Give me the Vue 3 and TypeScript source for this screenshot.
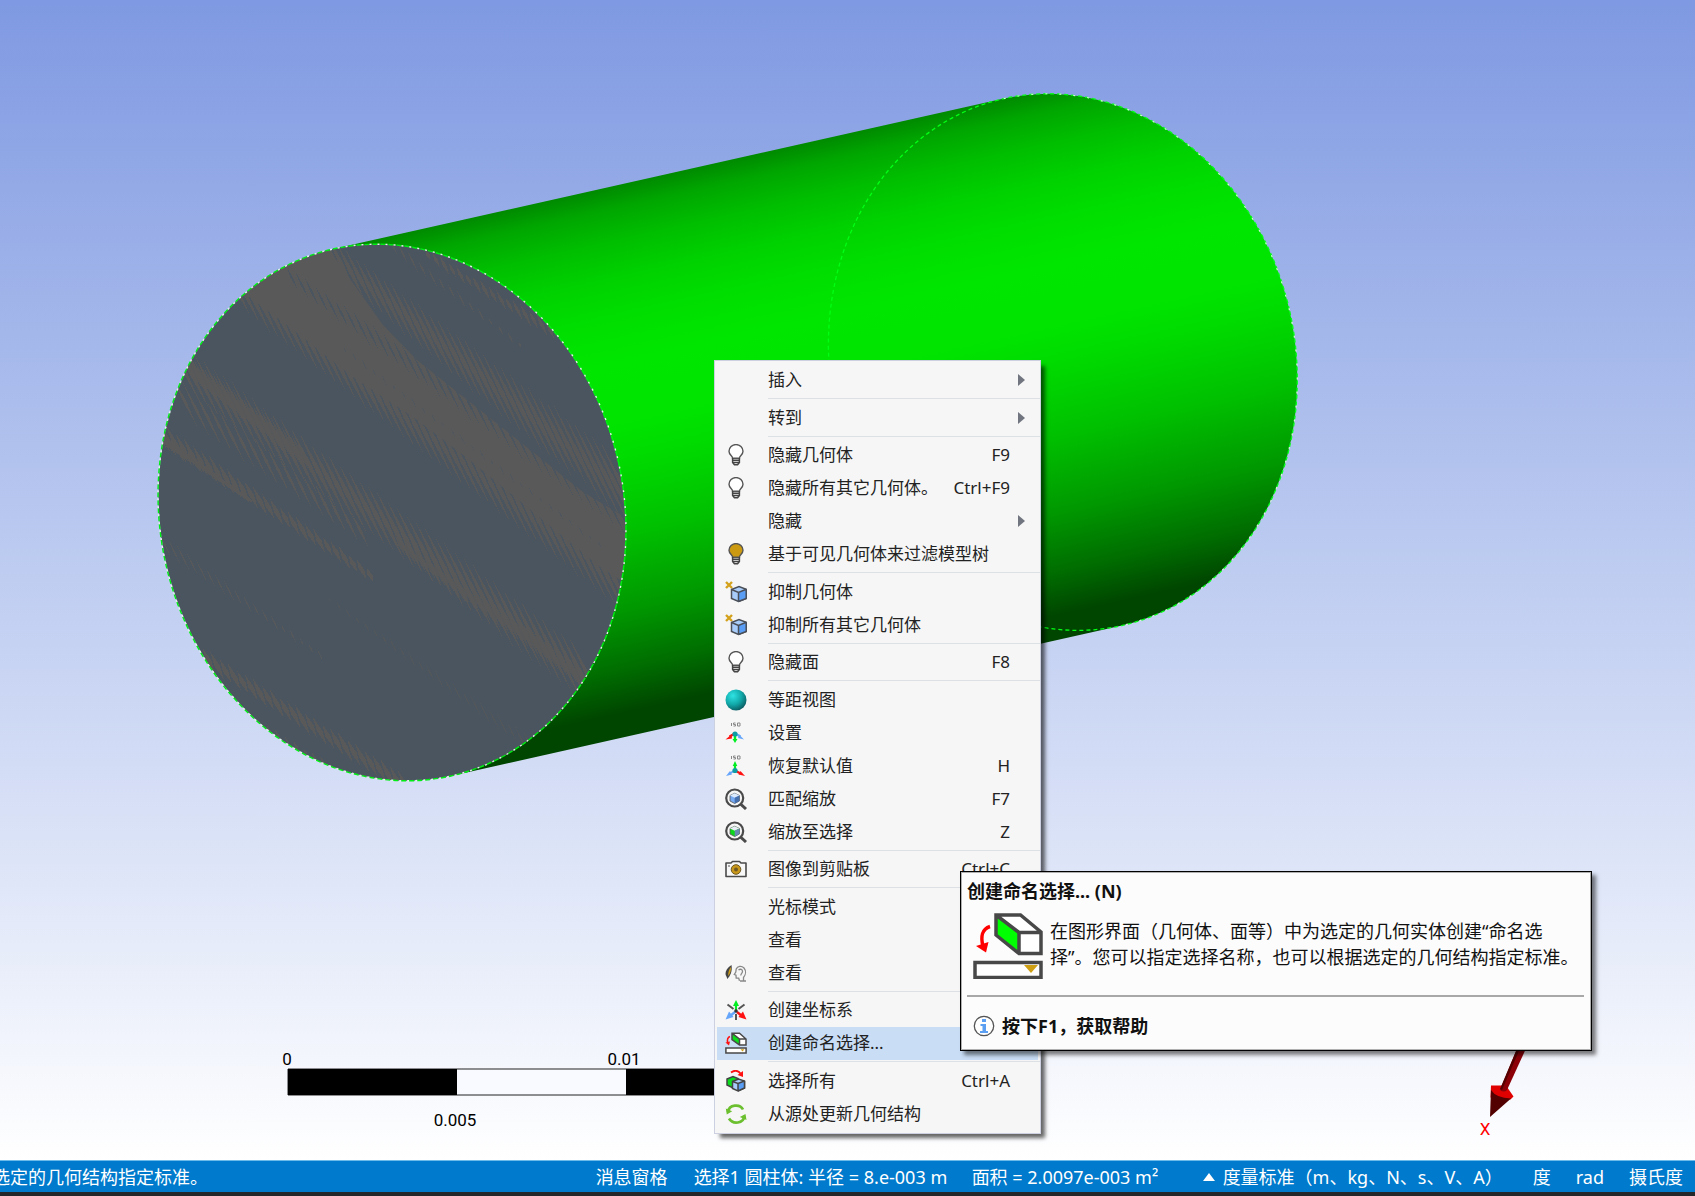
<script setup lang="ts">
interface MenuItem {
  label: string
  icon?: string
  shortcut?: string
  submenu?: boolean
  active?: boolean
}

interface Band {
  from: [number, number]
  to: [number, number]
  half: [number, number]
  pitch: number
  weight: number
  opacity: number
}

const groups: MenuItem[][] = [
  [{ label: '插入', submenu: true }],
  [{ label: '转到', submenu: true }],
  [
    { label: '隐藏几何体', icon: 'bulb', shortcut: 'F9' },
    { label: '隐藏所有其它几何体。', icon: 'bulb', shortcut: 'Ctrl+F9' },
    { label: '隐藏', submenu: true },
    { label: '基于可见几何体来过滤模型树', icon: 'bulb-on' },
  ],
  [
    { label: '抑制几何体', icon: 'suppress' },
    { label: '抑制所有其它几何体', icon: 'suppress' },
  ],
  [{ label: '隐藏面', icon: 'bulb', shortcut: 'F8' }],
  [
    { label: '等距视图', icon: 'sphere' },
    { label: '设置', icon: 'iso-set' },
    { label: '恢复默认值', icon: 'iso-restore', shortcut: 'H' },
    { label: '匹配缩放', icon: 'zoom-fit', shortcut: 'F7' },
    { label: '缩放至选择', icon: 'zoom-selection', shortcut: 'Z' },
  ],
  [{ label: '图像到剪贴板', icon: 'camera', shortcut: 'Ctrl+C' }],
  [
    { label: '光标模式', submenu: true },
    { label: '查看', submenu: true },
    { label: '查看', icon: 'look' },
  ],
  [
    { label: '创建坐标系', icon: 'coordinates' },
    { label: '创建命名选择...', icon: 'named', active: true },
  ],
  [
    { label: '选择所有', icon: 'select-all', shortcut: 'Ctrl+A' },
    { label: '从源处更新几何结构', icon: 'refresh' },
  ],
]

// Interference streaks on the cut face: short steep strokes strung along each band.
const bands: Band[] = [
  { from: [322, 248], to: [625, 492], half: [30, 56], pitch: 12, weight: 2.4, opacity: 1 },
  { from: [235, 285], to: [615, 580], half: [34, 46], pitch: 12, weight: 2.4, opacity: 1 },
  { from: [182, 366], to: [590, 680], half: [38, 46], pitch: 12, weight: 2.5, opacity: 1 },
  { from: [188, 366], to: [300, 452], half: [20, 20], pitch: 6, weight: 2, opacity: 0.8 },
  { from: [400, 545], to: [585, 680], half: [14, 18], pitch: 6, weight: 2, opacity: 0.8 },
  { from: [184, 400], to: [360, 530], half: [32, 20], pitch: 14, weight: 1.6, opacity: 1 },
  { from: [158, 432], to: [370, 575], half: [20, 10], pitch: 10, weight: 2.6, opacity: 1 },
  { from: [158, 436], to: [250, 500], half: [12, 4], pitch: 4, weight: 2, opacity: 1 },
  { from: [165, 545], to: [320, 655], half: [16, 4], pitch: 11, weight: 0.8, opacity: 0.8 },
  { from: [200, 655], to: [405, 785], half: [14, 16], pitch: 10, weight: 2.8, opacity: 1 },
  { from: [260, 725], to: [360, 785], half: [6, 6], pitch: 10, weight: 1.5, opacity: 0.8 },
  { from: [428, 255], to: [550, 330], half: [8, 12], pitch: 9, weight: 2, opacity: 1 },
  { from: [393, 246], to: [520, 345], half: [12, 4], pitch: 12, weight: 1, opacity: 0.8 },
  { from: [330, 600], to: [530, 745], half: [4, 14], pitch: 11, weight: 0.7, opacity: 0.7 },
]

const gaps: Band[] = [
  { from: [292, 278], to: [490, 420], half: [14, 24], pitch: 12, weight: 1.3, opacity: 1 },
  { from: [490, 420], to: [622, 515], half: [24, 28], pitch: 12, weight: 1.3, opacity: 1 },
  { from: [345, 350], to: [600, 545], half: [5, 5], pitch: 12, weight: 0.6, opacity: 0.7 },
]

function streaks(b: Band): string {
  const length = Math.hypot(b.to[0] - b.from[0], b.to[1] - b.from[1])
  const count = Math.floor(length / b.pitch)
  let d = ''
  for (let i = 0; i <= count; i++) {
    const t = i / count
    const x = b.from[0] + (b.to[0] - b.from[0]) * t
    const y = b.from[1] + (b.to[1] - b.from[1]) * t
    const h = b.half[0] + (b.half[1] - b.half[0]) * t + ((i * 7) % 5) - 2
    const dx = h * 0.44
    const dy = h * 0.9
    const w = b.weight
    d += `M${(x - dx).toFixed(1)} ${(y - dy).toFixed(1)}L${(x + w).toFixed(1)} ${y.toFixed(1)}L${(x + dx).toFixed(1)} ${(y + dy).toFixed(1)}L${(x - w).toFixed(1)} ${y.toFixed(1)}Z`
  }
  return d
}
</script>

<template>
  <div class="app">
    <svg class="sprites" aria-hidden="true">
      <defs>
        <radialGradient id="ball" cx="0.35" cy="0.3" r="0.75">
          <stop offset="0" stop-color="#2fe3e3" />
          <stop offset="0.55" stop-color="#12a9aa" />
          <stop offset="1" stop-color="#0b5b60" />
        </radialGradient>
        <symbol id="bulb" viewBox="0 0 22 22">
          <path d="M7.6 14.2C7.6 11.8 4 10.8 4 7.2a7 6.6 0 0 1 14 0c0 3.6-3.6 4.6-3.6 7z" fill="#fff" stroke="#555" stroke-width="1.4" />
          <path d="M7.6 14v4.5l1.8 2.2h3.2l1.8-2.2V14M7.6 16.3h6.8M7.8 18.6h6.4" fill="none" stroke="#444" stroke-width="1.5" />
        </symbol>
        <symbol id="bulb-on" viewBox="0 0 22 22">
          <path d="M7.6 14.2C7.6 11.8 4 10.8 4 7.2a7 6.6 0 0 1 14 0c0 3.6-3.6 4.6-3.6 7z" fill="#cc9a10" stroke="#555" stroke-width="1.4" />
          <path d="M7.6 14v4.5l1.8 2.2h3.2l1.8-2.2V14M7.6 16.3h6.8M7.8 18.6h6.4" fill="none" stroke="#444" stroke-width="1.5" />
        </symbol>
        <symbol id="suppress" viewBox="0 0 22 22">
          <path d="M1 1l6 6M7 1L1 7" stroke="#d3a11c" stroke-width="2.4" />
          <path d="M6.5 8.500L14 5.500l7.200 2.800v9.200L13.500 20.500l-7-3z" fill="#a9cdfa" stroke="#4a4f58" stroke-width="1.500" />
          <path d="M13.500 11.500l7.700-3.200v9.200L13.500 20.500z" fill="#5a9df5" />
          <path d="M6.500 8.500l7 3 7.700-3.200M13.500 11.500v9M21.200 8.300v9.200L13.500 20.500" fill="none" stroke="#4a4f58" stroke-width="1.500" />
        </symbol>
        <symbol id="sphere" viewBox="0 0 22 22"><circle cx="11" cy="11" r="10.500" fill="url(#ball)" /></symbol>
        <symbol id="iso-set" viewBox="0 0 22 22">
          <path d="M6.500 1v3M10.500 1H8.500v1.500h2V4h-2M12.500 1h2.500v3h-2.500z" fill="none" stroke="#888" stroke-width="1" />
          <path d="M10 13v4" stroke="#0e2" stroke-width="2.400" /><path d="M7.500 17h5L10 21z" fill="#0e2" />
          <path d="M9 12L4.500 14.500" stroke="#f11" stroke-width="2.200" /><path d="M6.500 12.500l-6 5 6.500-1z" fill="#f11" />
          <path d="M11 12l4.500 2.500" stroke="#65a5fa" stroke-width="2.200" /><path d="M14 12.500l5 5-6-1.500z" fill="#65a5fa" />
          <circle cx="10" cy="12" r="2.600" fill="#0f9da5" />
        </symbol>
        <symbol id="iso-restore" viewBox="0 0 22 22">
          <path d="M6.500 1v3M10.500 1H8.500v1.500h2V4h-2M12.500 1h2.500v3h-2.500z" fill="none" stroke="#888" stroke-width="1" />
          <path d="M10 15v-5" stroke="#0e2" stroke-width="2.200" /><path d="M7.700 11h4.600L10 6z" fill="#0e2" />
          <path d="M9 16l-4.500 2.500" stroke="#65a5fa" stroke-width="2" /><path d="M5 16l-4 5 6-1.500z" fill="#65a5fa" />
          <path d="M11 16l4.500 2.500" stroke="#f11" stroke-width="2.200" /><path d="M15.500 16l4.500 5-6.500-1.500z" fill="#f11" />
          <circle cx="10" cy="15.500" r="2.600" fill="#0f9da5" />
        </symbol>
        <symbol id="zoom-fit" viewBox="0 0 22 22">
          <path d="M15 15.500l6 5.500" stroke="#4a4a4a" stroke-width="3" />
          <circle cx="9.700" cy="10" r="8.500" fill="#f6f6f6" stroke="#4a4a4a" stroke-width="2.200" />
          <path d="M5 7.500l4.700-2.200 4.700 2.200v5.500l-4.700 2.500L5 13z" fill="#76aaf3" stroke="#555" stroke-width="0.800" />
          <path d="M5 7.500l4.700-2.200 4.700 2.200-4.700 2.200z" fill="#dceafd" />
          <path d="M9.700 9.700l4.700-2.200V13l-4.700 2.500z" fill="#466fae" />
        </symbol>
        <symbol id="zoom-selection" viewBox="0 0 22 22">
          <path d="M15 15.500l6 5.500" stroke="#4a4a4a" stroke-width="3" />
          <circle cx="9.700" cy="10" r="8.500" fill="#f6f6f6" stroke="#4a4a4a" stroke-width="2.200" />
          <path d="M5 7.500l4.700-2.200 4.700 2.200v5.500l-4.700 2.500L5 13z" fill="#0bd81a" stroke="#555" stroke-width="0.800" />
          <path d="M5 7.500l4.700-2.200 4.700 2.200-4.700 2.200z" fill="#e9eef6" />
          <path d="M9.700 9.700l4.700-2.200V13l-4.700 2.500z" fill="#6a86b2" />
        </symbol>
        <symbol id="camera" viewBox="0 0 22 22">
          <path d="M1 5h5l1.500-1.500h7L16 5h5v13.500H1z" fill="#f8f8f8" stroke="#4a4a4a" stroke-width="1.600" stroke-linejoin="round" />
          <circle cx="11" cy="11.500" r="4.800" fill="#c9981b" stroke="#6b5620" stroke-width="1" />
          <circle cx="11" cy="11.500" r="2" fill="#6f5a25" /><path d="M3 8h2" stroke="#555" />
        </symbol>
        <symbol id="look" viewBox="0 0 22 22">
          <path d="M6.500 3C2.500 5.500 .3 9 .5 12c.2 2 1.500 2.500 1.700 5C5.500 14 7.500 9 6.500 3z" fill="#444" />
          <path d="M5.800 5C3.700 8 3 11 3.300 14 5.500 11 6.300 8 5.800 5z" fill="#d0a01b" />
          <path d="M18.500 18.500v-3c2.500-3 2.500-7 .5-9.500-2.500-2.500-6.500-2-7.800 1l-.4 3-1.500 2.500 1.700.7.200 3h2.500l.8 2.500M13.500 8c2-1.500 4-.5 4 1.500s-2 2-1.500 4M21 19h-6" fill="none" stroke="#888" stroke-width="1.300" />
        </symbol>
        <symbol id="coordinates" viewBox="0 0 22 22">
          <path d="M2.500 5.500l6 4.500M19.500 5.500l-6 4.500M11 15v6" fill="none" stroke="#555" stroke-width="2" />
          <path d="M11 11V5" stroke="#0e2" stroke-width="2.200" /><path d="M8 7h6L11 1z" fill="#0e2" />
          <path d="M10 13l-5 4" stroke="#65a5fa" stroke-width="2.400" /><path d="M4 12.500L.5 20.500 8.500 18z" fill="#65a5fa" />
          <path d="M12 13l5 4" stroke="#f11" stroke-width="2.400" /><path d="M18 12.500l3.500 8L13.500 18z" fill="#f11" />
          <circle cx="11" cy="12" r="1.800" fill="#333" />
        </symbol>
        <symbol id="named" viewBox="0 0 70 66">
          <path d="M23 2h24.500L68 19v21.500H46L23 22z" fill="#fff" />
          <path d="M23 2l23 17.500v21L23 22z" fill="#0f0" />
          <path d="M23 2h24.500L68 19v21.500H46L23 22zM23 2l23 17.500h22M46 19.500v21" fill="none" stroke="#484848" stroke-width="3.500" />
          <path d="M17 13.500C9 16 7.500 24 10 33" fill="none" stroke="#f00" stroke-width="3.500" />
          <path d="M3 33l12.500-4L13 39.500z" fill="#f00" />
          <path d="M2 49.500h66v15H2z" fill="#fff" stroke="#484848" stroke-width="3.500" />
          <path d="M51 52h14l-7 8z" fill="#cf9f13" />
        </symbol>
        <symbol id="named-small" viewBox="0 0 22 22">
          <path d="M7 1.200h7.500L21 7v6h-6.500L7 7.500z" fill="#fff" />
          <path d="M7 1.200L14.500 7v6.200L7 7.500z" fill="#0bdc1c" />
          <path d="M7 1.200h7.500L21 7v6h-6.500L7 7.500zM7 1.200L14.500 7H21M14.500 7v6" fill="none" stroke="#484848" stroke-width="1.500" />
          <path d="M5 4.500C2.500 5.500 2 8 2.800 11" fill="none" stroke="#f11" stroke-width="1.500" />
          <path d="M.5 10.500l4.500-1-1 4z" fill="#f11" />
          <path d="M.9 16h20.200v5H.9z" fill="#fff" stroke="#484848" stroke-width="1.500" />
          <path d="M15.500 17.200h4l-2 2.300z" fill="#cf9f13" />
        </symbol>
        <symbol id="select-all" viewBox="0 0 22 22">
          <path d="M6 2.500C9 0 13 0 15.500 3.500" fill="none" stroke="#f11" stroke-width="1.800" /><path d="M18 1v6l-5.500-2z" fill="#f11" />
          <path d="M2 9l6-2.500 5 2v7L8 18l-6-3z" fill="#0bdc1c" stroke="#444" stroke-width="1.500" />
          <path d="M7.500 11.500l6-2.500 6 2v7L13 21l-5.500-2.500z" fill="#a9cdfa" stroke="#444" stroke-width="1.500" />
          <path d="M13 13.500l6.500-2.500v7L13 21z" fill="#5a9df5" />
          <path d="M7.500 11.500l5.500 2 6.500-2.500M13 13.500V21M19.500 11v7L13 21" fill="none" stroke="#444" stroke-width="1.500" />
        </symbol>
        <symbol id="refresh" viewBox="0 0 22 22">
          <path d="M3 9C4 1.500 15 .5 18 6.500M19.500 13C18.500 20.500 8 22 4 15.500" fill="none" stroke="#6cc02f" stroke-width="2.700" />
          <path d="M.8 5.500l1 6 5.400-3.200zM21.500 17l-1-6-5.700 3z" fill="#6cc02f" />
        </symbol>
      </defs>
    </svg>

    <main class="viewport">
      <svg class="scene" viewBox="0 0 1695 1160" preserveAspectRatio="xMinYMin slice" role="img" aria-label="圆柱体">
        <defs>
          <linearGradient id="body" x1="0" y1="-270" x2="0" y2="270" gradientUnits="userSpaceOnUse">
            <stop offset="0" stop-color="#008a00" />
            <stop offset="0.040" stop-color="#00a600" />
            <stop offset="0.100" stop-color="#00be00" />
            <stop offset="0.170" stop-color="#00d200" />
            <stop offset="0.240" stop-color="#00de00" />
            <stop offset="0.320" stop-color="#00e600" />
            <stop offset="0.430" stop-color="#00e400" />
            <stop offset="0.500" stop-color="#00da00" />
            <stop offset="0.630" stop-color="#00c000" />
            <stop offset="0.770" stop-color="#009800" />
            <stop offset="0.880" stop-color="#006c00" />
            <stop offset="0.955" stop-color="#004600" />
            <stop offset="1" stop-color="#004600" />
          </linearGradient>
          <clipPath id="face"><ellipse cx="392" cy="512.500" rx="231.500" ry="270" transform="rotate(-12.640 392 512.500)" /></clipPath>
        </defs>

        <g transform="translate(392 512.500) rotate(-12.640)">
          <path d="M0-270H687.500A232.500 270 0 0 1 687.500 270H0z" fill="url(#body)" />
          <ellipse cx="687.500" rx="232.500" ry="270" fill="none" stroke="#00ff14" stroke-width="1.300" stroke-dasharray="4 3" />
          <path d="M687.500-270A232.500 270 0 0 1 687.500 270" fill="none" stroke="#d9f5e0" stroke-width="1.200" stroke-dasharray="2 12" />
        </g>

        <g clip-path="url(#face)">
          <path d="M150 230h490v560H150z" fill="#4b555f" />
          <path d="M240 290L285 255 325 244 383 325 417 360 480 410 533 452 583 492 630 520 628 585 600 567 533 512 467 458 417 420 350 375 300 335z" fill="#595959" />
          <g shape-rendering="crispEdges">
            <path v-for="(band, i) in bands" :key="i" :d="streaks(band)" fill="#595959" :opacity="band.opacity" />
            <path v-for="(band, i) in gaps" :key="i" :d="streaks(band)" fill="#4b555f" :opacity="band.opacity" />
          </g>
        </g>
        <g transform="translate(392 512.500) rotate(-12.640)" fill="none">
          <ellipse rx="232" ry="270" stroke="#00ee14" stroke-width="1.400" stroke-dasharray="5 3" />
          <ellipse rx="232" ry="270" stroke="#e4f3ea" stroke-width="1.400" stroke-dasharray="2 6" stroke-dashoffset="3" />
        </g>

        <g>
          <path d="M288 1069h676v26H288z" fill="#f8faff" stroke="#222" />
          <path d="M288 1069h169v26H288zM626 1069h169v26H626z" />
          <g class="scale-text" text-anchor="middle">
            <text x="287" y="1065">0</text>
            <text x="624" y="1065">0.01</text>
            <text x="455" y="1126">0.005</text>
          </g>
        </g>

        <g>
          <path d="M1491 1085.500h15l7.500 11-3 3-20-2z" fill="#e00000" />
          <path d="M1519 1044h9l-21 46q-3 3-7 0z" fill="#8c0008" />
          <path d="M1519 1044h3l-20 46-2-1z" fill="#560000" />
          <path d="M1491 1090q5 8 20 8.500l-21 18.500z" fill="#520000" />
          <text class="axis-text" x="1485" y="1135" text-anchor="middle">X</text>
        </g>
      </svg>

      <nav class="menu" role="menu">
        <div v-for="(group, g) in groups" :key="g" class="group" role="group">
          <button v-for="(item, i) in group" :key="i" type="button" role="menuitem" class="item" :class="{ active: item.active }">
            <span class="icon"><svg v-if="item.icon" width="22" height="22"><use :href="item.icon === 'named' ? '#named-small' : '#' + item.icon" /></svg></span>
            <span class="label">{{ item.label }}</span>
            <span v-if="item.shortcut" class="shortcut">{{ item.shortcut }}</span>
            <span v-if="item.submenu" class="arrow"></span>
          </button>
        </div>
      </nav>

      <aside class="tooltip" role="tooltip">
        <h2>创建命名选择... (N)</h2>
        <div class="tip-body">
          <svg width="70" height="66" aria-hidden="true"><use href="#named" /></svg>
          <p>在图形界面（几何体、面等）中为选定的几何实体创建“命名选<br />择”。您可以指定选择名称，也可以根据选定的几何结构指定标准。</p>
        </div>
        <footer>
          <svg width="22" height="22" viewBox="0 0 22 22" aria-hidden="true">
            <circle cx="11" cy="11" r="9.700" fill="#fff" stroke="#555" stroke-width="1.300" />
            <path d="M9 4h4v3H9zM7.500 9H13v7h2v2H7v-2h2.500v-5h-2z" fill="#5a9ff2" />
          </svg>
          <strong>按下F1，获取帮助</strong>
        </footer>
      </aside>
    </main>

    <footer class="status">
      <span class="hint">选定的几何结构指定标准。</span>
      <span class="messages">消息窗格</span>
      <span class="selection">选择1 圆柱体: 半径 = 8.e-003 m</span>
      <span class="area">面积 = 2.0097e-003 m²</span>
      <span class="units"><i class="up"></i>度量标准（m、kg、N、s、V、A）</span>
      <span class="angle">度</span>
      <span class="speed">rad</span>
      <span class="temperature">摄氏度</span>
    </footer>
  </div>
</template>

<style>
body {
  margin: 0;
  overflow: hidden;
}
</style>

<style scoped>
.app {
  display: flex;
  flex-direction: column;
  height: 100vh;
  overflow: hidden;
  font-family: "Noto Sans", "Noto Sans CJK SC", sans-serif;
  color: #222;
}
.sprites {
  position: absolute;
  width: 0;
  height: 0;
}
.viewport {
  position: relative;
  flex: 1;
  min-height: 0;
  overflow: hidden;
  background: linear-gradient(#7f99e2, #bfcdf1 50%, #dfe6f8 76%, #fff);
}
.scene {
  display: block;
  width: 100%;
  height: 100%;
}
.scale-text {
  font: 17px "Liberation Sans Narrow", Roboto, sans-serif;
  fill: #000;
}
.axis-text {
  font: 17px Roboto, sans-serif;
  fill: #f00;
}
.menu {
  position: absolute;
  left: 714px;
  top: 360px;
  box-sizing: border-box;
  width: 327px;
  padding: 3px 0 2px 2px;
  background: #f6f6f6;
  border: 1px solid #ccd0e0;
  box-shadow: 5px 5px 4px -1px rgba(0, 0, 0, 0.6);
}
.group + .group {
  position: relative;
  padding-top: 4px;
}
.group:nth-child(odd) + .group {
  padding-top: 5px;
}
.group + .group::before {
  content: "";
  position: absolute;
  top: 1px;
  left: 51px;
  right: 0;
  height: 1px;
  background: #dde1e6;
}
.item {
  display: flex;
  align-items: center;
  box-sizing: border-box;
  width: calc(100% - 2px);
  height: 33px;
  padding: 0 13px 2px 8px;
  border: 0;
  background: none;
  color: #222;
  font: inherit;
  font-size: 17px;
  line-height: 30px;
  text-align: left;
  white-space: nowrap;
}
.item.active {
  background: #c9def5;
}
.icon {
  display: flex;
  width: 43px;
}
.label {
  flex: 1;
}
.shortcut {
  margin-right: 15px;
}
.arrow {
  border: 6px solid transparent;
  border-right: 0;
  border-left: 7px solid #70757f;
}
.tooltip {
  position: absolute;
  left: 960px;
  top: 871px;
  box-sizing: border-box;
  width: 632px;
  padding: 6px 7px 11px 6px;
  background: #fcfcfc;
  border: 1px solid #000;
  outline: 1px solid rgba(0, 0, 0, 0.3);
  outline-offset: -2px;
  box-shadow: 4px 4px 4px rgba(0, 0, 0, 0.5);
  color: #111;
  font-size: 18px;
}
.tooltip h2 {
  margin: 0;
  font-size: 18px;
  line-height: 26px;
}
.tip-body {
  display: flex;
  gap: 7px;
  padding: 9px 0 16px 6px;
  border-bottom: 2px solid #a8a8a8;
}
.tip-body p {
  margin: 5px 0 0;
  line-height: 26px;
  white-space: nowrap;
}
.tip-body svg {
  flex: none;
}
.tooltip footer {
  display: flex;
  align-items: center;
  gap: 7px;
  padding: 16px 0 0 6px;
  line-height: 26px;
}
.status {
  display: flex;
  align-items: center;
  box-sizing: border-box;
  height: 36px;
  padding-right: 12px;
  background: #007acc;
  border-top: 1px solid #6cbbe8;
  border-bottom: 4px solid #24262a;
  color: #fff;
  font-size: 18px;
  line-height: 30px;
  white-space: nowrap;
}
.hint {
  margin-left: -8px;
}
.messages {
  margin-left: auto;
}
.selection {
  width: 278px;
  margin-left: 26px;
}
.area {
  width: 231px;
}
.units {
  display: flex;
  align-items: center;
  gap: 8px;
}
.up {
  border: 6px solid transparent;
  border-top: 0;
  border-bottom: 8px solid #fff;
}
.angle {
  margin-left: 30px;
}
.speed,
.temperature {
  margin-left: 25px;
}
</style>
